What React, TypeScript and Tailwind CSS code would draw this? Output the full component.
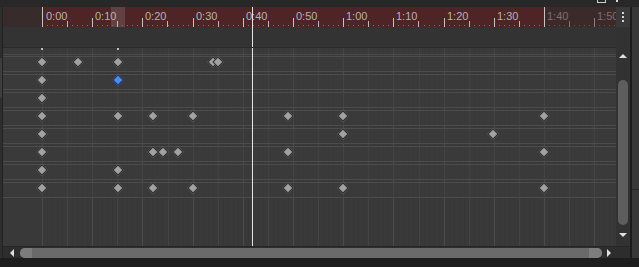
import React from 'react'

// page x of each keyframe, one list per track
const tracks: number[][] = [
  [42, 78, 118, 213, 218],
  [42, 118],
  [42],
  [42, 118, 153, 193, 288, 343, 544],
  [42, 343, 493],
  [42, 153, 163, 178, 288, 544],
  [42, 118],
  [42, 118, 153, 193, 288, 343, 544],
]

const labels = ['0:00', '0:10', '0:20', '0:30', '0:40', '0:50', '1:00', '1:10', '1:20', '1:30', '1:40', '1:50']

const majorX = (i: number) => Math.round(42 + 50.2 * i)
const CANVAS_LEFT = 3
const PLAYHEAD = 252

const Playhead = () => (
  <div className="absolute top-0 bottom-0 w-px bg-[#e4e4e4]" style={{ left: PLAYHEAD - CANVAS_LEFT }} />
)

const Diamond = ({ x, y, blue }: { x: number; y: number; blue?: boolean }) => (
  <div
    className={`absolute w-[8px] h-[8px] rotate-45 border ${blue ? 'bg-[#4f8bef] border-[#1d3a6e]' : 'bg-[#a2a2a2] border-[#2c2c2c]'}`}
    style={{ left: x - CANVAS_LEFT - 4, top: y - 4 }}
  />
)

const Ruler = () => {
  const seconds = Array.from({ length: 115 }, (_, i) => i)
  return (
    <div className="relative h-[20px] flex-1 overflow-hidden bg-[#4e2426]">
      {/* before 0:00 and after 1:40 */}
      <div className="absolute left-0 top-0 h-full w-[39px] bg-[#382b2b]" />
      <div className="absolute top-0 h-full right-0 bg-[#3c2a2b]" style={{ left: majorX(10) - CANVAS_LEFT }} />
      {/* selection highlight */}
      <div className="absolute top-0 h-full w-[14px] bg-[#623f41]" style={{ left: 111 - CANVAS_LEFT }} />

      {seconds.map((s) => (
        <div
          key={s}
          className={`absolute top-[18px] w-px h-px ${s >= 100 ? 'bg-[#6a5555]' : 'bg-[#8c6b6c]'}`}
          style={{ left: Math.round(42 + 5.02 * s) - CANVAS_LEFT }}
        />
      ))}

      {labels.map((l, i) => {
        const x = majorX(i) - CANVAS_LEFT
        const dim = i >= 10
        const edge = i === 0 || i === 10
        return (
          <React.Fragment key={l}>
            <div
              className={`absolute w-px ${edge ? 'top-0 h-full' : 'top-[11px] h-[9px]'} ${dim && !edge ? 'bg-[#8a8080]' : 'bg-[#c4c4c4]'}`}
              style={{ left: x }}
            />
            <div
              className={`absolute top-[14px] h-[6px] w-px ${dim ? 'bg-[#7f7777]' : 'bg-[#b9b9b9]'}`}
              style={{ left: x + 25 }}
            />
            <span
              className={`absolute top-[4px] text-[11px] leading-[11px] ${dim ? 'text-[#7d6f70]' : 'text-[#b7b3b3]'}`}
              style={{ left: x + (i === 0 ? 4 : 3) }}
            >
              {l}
            </span>
          </React.Fragment>
        )
      })}
      <Playhead />
    </div>
  )
}

const Grid = () => {
  const minor = Array.from({ length: 24 }, (_, i) => i)
  const fine = Array.from({ length: 120 }, (_, i) => i)
  return (
    <div className="relative flex-1 overflow-hidden bg-[#393939]">
      {fine.map((s) => (
        <div
          key={`f${s}`}
          className="absolute top-0 bottom-0 w-px bg-[#363636]"
          style={{ left: Math.round(42 + 5.02 * s) - CANVAS_LEFT }}
        />
      ))}
      {minor.map((i) => (
        <div
          key={i}
          className={`absolute top-0 bottom-0 w-px ${i % 2 === 0 ? 'bg-[#4a4a4a]' : 'bg-[#444444]'}`}
          style={{ left: Math.round(42 + 25.1 * i) - CANVAS_LEFT }}
        />
      ))}

      <div className="relative flex flex-col">
        {/* summary row */}
        <div className="relative h-[7px] border-b border-[#4b4b4b] bg-[#3b3b3b]/40">
          <div className="absolute top-0 w-[2px] h-[2px] bg-[#bdbdbd]" style={{ left: 42 - CANVAS_LEFT - 1 }} />
          <div className="absolute top-0 w-[2px] h-[2px] bg-[#bdbdbd]" style={{ left: 118 - CANVAS_LEFT - 1 }} />
        </div>
        <div className="flex flex-col gap-[2px] pt-[1px]">
          {tracks.map((keys, r) => (
            <div key={r} className="relative h-[16px] border-y border-[#4c4c4c] bg-[#3c3c3c]/50">
              {keys.map((x, k) => (
                <Diamond key={k} x={x} y={5} blue={r === 1 && x === 118} />
              ))}
            </div>
          ))}
        </div>
      </div>

      <Playhead />
    </div>
  )
}

export default function App() {
  return (
    <div className="w-[639px] h-[267px] flex flex-col bg-[#2a2a2a] overflow-hidden font-['Liberation_Sans',sans-serif]">
      {/* top strip */}
      <div className="relative h-[7px] bg-[#282828]">
        <div className="absolute left-[597px] top-0 w-[9px] h-[3px] border-x border-b border-[#cfcfcf]" />
        <div className="absolute left-[616px] top-0 w-[2px] h-[2px] bg-[#d8d8d8]" />
      </div>

      <div className="flex flex-1 min-h-0">
        {/* left edge */}
        <div className="w-[3px] flex flex-col bg-[#2e2e2e] border-r border-[#222222]">
          <div className="h-[51px]" />
          <div className="h-[40px] w-[2px] bg-[#3e3e3e]" />
        </div>

        <div className="flex flex-col w-[627px]">
          {/* ruler row */}
          <div className="flex h-[20px]">
            <Ruler />
            <div className="relative w-[14px] bg-[#393939] flex flex-col items-center justify-center gap-[2px] pr-[1px]">
              <div className="w-[2px] h-[2px] bg-[#d6d6d6]" />
              <div className="w-[2px] h-[2px] bg-[#d6d6d6]" />
              <div className="w-[2px] h-[2px] bg-[#d6d6d6]" />
            </div>
          </div>

          <div className="flex flex-1 min-h-0">
            <div className="flex flex-col w-[613px]">
              {/* empty header band */}
              <div className="relative h-[21px] bg-[#333333] border-b border-[#2a2a2a]">
                <Playhead />
              </div>
              <Grid />
            </div>
            {/* vertical scrollbar */}
            <div className="w-[14px] bg-[#323232] flex flex-col items-center">
              <div className="h-[21px]" />
              <div className="mt-[6px] w-0 h-0 border-x-[4px] border-x-transparent border-b-[4px] border-b-[#e0e0e0]" />
              <div className="mt-[22px] h-[145px] w-[10px] rounded-full bg-[#5d5d5d]" />
              <div className="mt-[8px] w-0 h-0 border-x-[4px] border-x-transparent border-t-[4px] border-t-[#e0e0e0]" />
            </div>
          </div>

          {/* horizontal scrollbar */}
          <div className="h-[12px] flex items-center bg-[#2d2d2d] border-t border-[#262626]">
            <div className="w-[7px]" />
            <div className="w-0 h-0 border-y-[4px] border-y-transparent border-r-[4px] border-r-[#e0e0e0]" />
            <div className="ml-[6px] h-[10px] w-[582px] flex rounded-full overflow-hidden bg-[#6a6a6a]">
              <div className="w-[12px] h-full bg-[#7c7c7c]" />
              <div className="flex-1" />
              <div className="w-[13px] h-full bg-[#7e7e7e]" />
            </div>
            <div className="ml-[5px] w-0 h-0 border-y-[4px] border-y-transparent border-l-[4px] border-l-[#e0e0e0]" />
          </div>
        </div>

        {/* neighbouring panel edge */}
        <div className="w-[9px] flex flex-col border-l-2 border-[#1c1c1c] bg-[#383838]">
          <div className="h-[183px] border-b border-[#262626]" />
        </div>
      </div>

      {/* bottom strip */}
      <div className="h-[9px] bg-[#1d1d1d]" />
    </div>
  )
}
